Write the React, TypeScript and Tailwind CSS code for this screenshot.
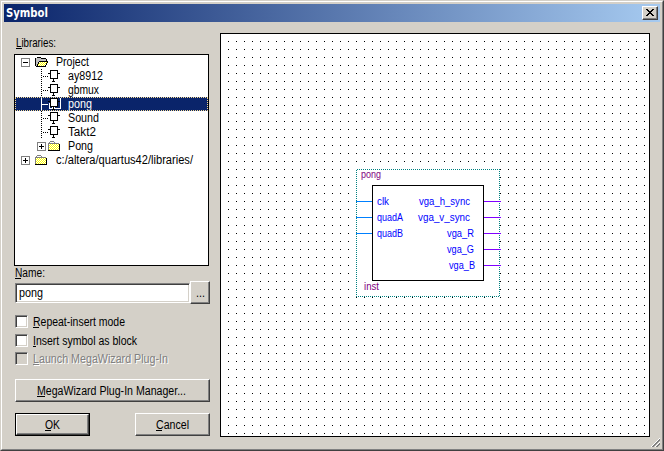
import React from "react";

const raised = "border border-t-white border-l-white border-r-[#404040] border-b-[#404040] shadow-[inset_-1px_-1px_0_#808080] bg-[#d4d0c8]";
const sunken = "border border-t-[#808080] border-l-[#808080] border-r-white border-b-white shadow-[inset_1px_1px_0_#404040,inset_-1px_-1px_0_#d4d0c8]";

/** Interface text stretched to a fixed advance width, like the bitmap system font. */
function Label({ text, w, u = false, etched = false }: { text: string; w: number; u?: boolean; etched?: boolean }) {
  const underline = text[0] === "I" ? 3 : text[0] === "M" ? 8 : 6;
  return (
    <svg width={w} height={14} className="block shrink-0 overflow-visible fill-current">
      {etched && (
        <g fill="white">
          <text x={1} y={12} textLength={w} lengthAdjust="spacingAndGlyphs">{text}</text>
          <rect x={1} y={13} width={underline} height={1} />
        </g>
      )}
      <text x={0} y={11} textLength={w} lengthAdjust="spacingAndGlyphs">{text}</text>
      {u && <rect x={0} y={12} width={underline} height={1} />}
    </svg>
  );
}

function Expander({ open = false }: { open?: boolean }) {
  return (
    <svg width={9} height={9} shapeRendering="crispEdges" className="shrink-0">
      <rect x=".5" y=".5" width="8" height="8" fill="white" stroke="#808080" />
      <path d={open ? "M2 4.5h5" : "M2 4.5h5M4.5 2v5"} stroke="black" />
    </svg>
  );
}

function Folder({ open = false }: { open?: boolean }) {
  return (
    <svg width={14} height={11} shapeRendering="crispEdges" className="shrink-0">
      <defs>
        <pattern id={open ? "ditherOpen" : "dither"} x={open ? 1 : 0} width="2" height="2" patternUnits="userSpaceOnUse">
          <rect width="2" height="2" fill="#ffff00" />
          <rect width="1" height="1" fill="white" />
          <rect x="1" y="1" width="1" height="1" fill="white" />
        </pattern>
      </defs>
      {open ? (
        <>
          <path d="M1 1h5v1h5v3H3v5H1z" fill="#c0c0c0" />
          <path d="M4 5h8v1h-1v2h-1v2H2V8h1V6h1z" fill="url(#ditherOpen)" />
          <path d="M1.5 .5h4M6 1.5h5M.5 1v8M11.5 2v2M4 4.5h9M3.5 5v2M2.5 7v2M12.5 5v1M11.5 6v2M10.5 8v2M1 9.5h9" stroke="black" fill="none" />
        </>
      ) : (
        <>
          <path d="M1 2h10v7H1z" fill="url(#dither)" />
          <path d="M2 .5h4M1.5 1v1M6.5 1v1M7 2.5h4M.5 2v7M1 2.5h6" stroke="#808080" fill="none" />
          <path d="M11.5 3v7M0 9.5h12" stroke="black" />
        </>
      )}
    </svg>
  );
}

function Chip({ selected = false }: { selected?: boolean }) {
  return (
    <svg width={13} height={14} shapeRendering="crispEdges" className="shrink-0">
      {selected && <path d="M12.5 1v11M1 11.5h12M1.5 6v6" stroke="white" />}
      {selected && <path d="M4 10h3v3H4z" fill="white" />}
      <rect x="2.5" y="1.5" width="7" height="8" fill="white" stroke="black" />
      <path d="M0 4.5h2M10 4.5h2M5.5 10v2M4 12.5h3" stroke="black" />
    </svg>
  );
}

function Leaf({ text, w, selected = false }: { text: string; w: number; selected?: boolean }) {
  return (
    <div className={"flex h-[14px] pl-[26px] " + (selected ? "bg-[#0a246a] text-white outline-1 -outline-offset-1 outline-dotted outline-[#f5db95]" : "")}>
      <svg width={7} height={14} shapeRendering="crispEdges" className="shrink-0">
        {selected ? (
          <path d="M.5 1v12M1 7.5h6" stroke="white" />
        ) : (
          <path d="M.5 0v14M2 7.5h5" stroke="black" strokeDasharray="1 1" />
        )}
      </svg>
      <Chip selected={selected} />
      <div className="w-[7px]" />
      <Label text={text} w={w} />
    </div>
  );
}

function Check({ text, w, disabled = false }: { text: string; w: number; disabled?: boolean }) {
  return (
    <div className={"flex h-[13px] items-center " + (disabled ? "text-[#808080]" : "")}>
      <div className={"mr-[5px] size-[13px] " + sunken + (disabled ? " bg-[#d4d0c8]" : " bg-white")} />
      <Label text={text} w={w} u etched={disabled} />
    </div>
  );
}

/** Diagonal ridges of the resize corner; the index is the x + y sum of the diagonal. */
const ridges: [number, string][] = [[8, "white"], [9, "#808080"], [10, "#808080"], [12, "white"], [13, "#808080"], [14, "#808080"]];

function Grip() {
  return (
    <svg width={9} height={9} shapeRendering="crispEdges" className="mt-px ml-auto">
      {ridges.map(([sum, color]) =>
        Array.from({ length: 17 - sum }, (_, i) => (
          <rect key={sum + "-" + i} x={sum - 8 + i} y={8 - i} width="1" height="1" fill={color} />
        )),
      )}
    </svg>
  );
}

const leftPins: [string, number][] = [["clk", 12], ["quadA", 26], ["quadB", 26]];
const rightPins: [string, number, number][] = [["vga_h_sync", 419, 51], ["vga_v_sync", 418, 52], ["vga_R", 447, 27], ["vga_G", 447, 27], ["vga_B", 449, 26]];

function Schematic() {
  return (
    <svg width={428} height={402} viewBox="221 34 428 402" className="block text-[10.5px]">
      <defs>
        <pattern id="grid" x="228" y="41" width="8" height="8" patternUnits="userSpaceOnUse">
          <rect width="1" height="1" fill="black" />
        </pattern>
      </defs>
      <g shapeRendering="crispEdges">
        <rect x="221" y="34" width="428" height="402" fill="url(#grid)" />
        <rect x="356" y="169" width="144" height="128" fill="white" />
        <path d="M357 169.5h143M356 296.5h144M356.5 170v127M499.5 169v128" stroke="#008080" strokeDasharray="1 1" fill="none" />
        <rect x="372.5" y="185.5" width="111" height="95" fill="white" stroke="black" />
        {leftPins.map((p, i) => <path key={p[0]} d={`M356 ${201.5 + i * 16}h16`} stroke="#0080ff" />)}
        {rightPins.map((p, i) => <path key={p[0]} d={`M484 ${201.5 + i * 16}h17`} stroke="#8000ff" />)}
      </g>
      <g fill="#0000ff">
        {leftPins.map(([t, w], i) => <text key={t} x={377} y={205 + i * 16} textLength={w} lengthAdjust="spacingAndGlyphs">{t}</text>)}
        {rightPins.map(([t, x, w], i) => <text key={t} x={x} y={205 + i * 16} textLength={w} lengthAdjust="spacingAndGlyphs">{t}</text>)}
      </g>
      <g fill="#800080">
        <text x={361} y={178} textLength={20} lengthAdjust="spacingAndGlyphs">pong</text>
        <text x={364} y={290} textLength={15} lengthAdjust="spacingAndGlyphs">inst</text>
      </g>
    </svg>
  );
}

export default function App() {
  return (
    <div className="h-[451px] w-[664px] border border-t-[#d4d0c8] border-l-[#d4d0c8] border-r-[#404040] border-b-[#404040] bg-[#d4d0c8] font-['Liberation_Sans',Arial,sans-serif] text-[12px] leading-[14px] text-black">
      <div className="h-full border border-t-white border-l-white border-r-[#808080] border-b-[#808080] px-[2px] pt-[2px]">
        <div className="flex h-[18px] items-center justify-between bg-linear-to-r/srgb from-[#0a246a] to-[#a6caf0] pr-[2px] pl-[2px]">
          <svg width={46} height={18} className="overflow-visible">
            <text x={0} y={13} textLength={42} lengthAdjust="spacingAndGlyphs" fill="white" className="font-['DejaVu_Sans',sans-serif] text-[11.5px] font-bold">Symbol</text>
          </svg>
          <button className={"flex h-[14px] w-[16px] justify-center pt-[2px] " + raised}>
            <svg width={8} height={7} shapeRendering="crispEdges">
              <path d="M0 0h2v1h1v1h2V1h1V0h2v1H7v1H6v1H5v1h1v1h1v1h1v1H6V6H5V5H3v1H2v1H0V6h1V5h1V4h1V3H2V2H1V1H0z" fill="black" />
            </svg>
          </button>
        </div>
        <div className="flex pt-[11px] pl-[10px]">
          <div className="w-[206px]">
            <div className="flex h-[21px] pt-[3px] pl-[2px]"><Label text="Libraries:" w={40} u /></div>
            <div className="h-[212px] w-[195px] border border-black bg-white">
              <div className="flex h-[14px] items-center pl-[6px]"><Expander open /><div className="w-[5px]" /><Folder open /><div className="w-[7px]" /><Label text="Project" w={33} /></div>
              <Leaf text="ay8912" w={35} />
              <Leaf text="gbmux" w={31} />
              <Leaf text="pong" w={24} selected />
              <Leaf text="Sound" w={31} />
              <Leaf text="Takt2" w={28} />
              <div className="flex h-[14px] items-center pl-[22px]"><Expander /><div className="w-[2px]" /><Folder /><div className="w-[6px]" /><Label text="Pong" w={25} /></div>
              <div className="flex h-[14px] items-center pl-[6px]"><Expander /><div className="w-[5px]" /><Folder /><div className="w-[7px]" /><Label text="c:/altera/quartus42/libraries/" w={137} /></div>
            </div>
            <div className="flex h-[15px] pl-px"><Label text="Name:" w={30} u /></div>
            <div className="flex items-center pl-px">
              <div className={"flex h-[20px] w-[175px] items-center bg-white pl-[3px] " + sunken}><Label text="pong" w={24} /></div>
              <button className={"flex h-[23px] w-[20px] items-center justify-center " + raised}><Label text="..." w={9} /></button>
            </div>
            <div className="flex flex-col gap-[6px] pt-[11px] pl-px">
              <Check text="Repeat-insert mode" w={92} />
              <Check text="Insert symbol as block" w={104} />
              <div className="-mt-px"><Check text="Launch MegaWizard Plug-In" w={135} disabled /></div>
            </div>
            <div className="pt-[14px] pl-px">
              <button className={"flex h-[23px] w-[195px] items-center justify-center pr-[2px] " + raised}><Label text="MegaWizard Plug-In Manager..." w={149} u /></button>
            </div>
            <div className="flex justify-between pt-[11px] pr-[10px] pl-px">
              <div className="h-[23px] w-[75px] border border-black">
                <button className={"flex h-full w-full items-center justify-center " + raised}><Label text="OK" w={15} u /></button>
              </div>
              <button className={"flex h-[23px] w-[75px] items-center justify-center " + raised}><Label text="Cancel" w={33} u /></button>
            </div>
          </div>
          <div className="h-[404px] w-[430px] border border-black bg-white"><Schematic /></div>
        </div>
        <Grip />
      </div>
    </div>
  );
}
